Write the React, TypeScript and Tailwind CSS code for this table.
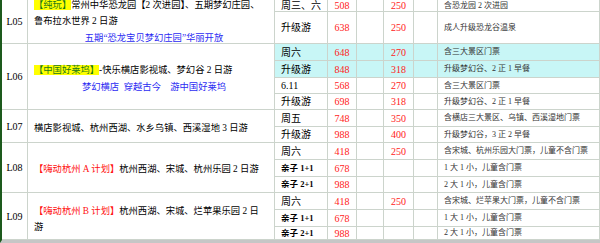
import type { ReactNode } from 'react';

type Row = {
  day: string;
  p1: string;
  p2: string;
  note: string;
  hl?: boolean;
  small?: boolean;
};

type Group = {
  code: string;
  start: number;
  span: string;
  pad: string;
  body: ReactNode;
};

const rows: Row[] = [
  { day: '周三、六', p1: '508', p2: '250', note: '含恐龙园 2 次进园' },
  { day: '升级游', p1: '638', p2: '250', note: '成人升级恐龙谷温泉' },
  { day: '周六', p1: '648', p2: '270', note: '含三大景区门票', hl: true },
  { day: '升级游', p1: '848', p2: '318', note: '升级梦幻谷、2 正 1 早餐', hl: true },
  { day: '6.11', p1: '568', p2: '270', note: '含三大景区门票' },
  { day: '升级游', p1: '698', p2: '318', note: '升级梦幻谷、2 正 1 早餐' },
  { day: '周五', p1: '748', p2: '350', note: '含横店三大景区、乌镇、西溪湿地门票' },
  { day: '升级游', p1: '988', p2: '400', note: '升级梦幻谷，3 正 2 早餐' },
  { day: '周六', p1: '418', p2: '250', note: '含宋城、杭州乐园大门票，儿童不含门票' },
  { day: '亲子 1+1', p1: '678', p2: '', note: '1 大 1 小，儿童含门票', small: true },
  { day: '亲子 2+1', p1: '988', p2: '', note: '2 大 1 小，儿童含门票', small: true },
  { day: '周六', p1: '418', p2: '250', note: '含宋城、烂苹果大门票，儿童不含门票' },
  { day: '亲子 1+1', p1: '678', p2: '', note: '1 大 1 小，儿童含门票', small: true },
  { day: '亲子 2+1', p1: '988', p2: '', note: '2 大 1 小，儿童含门票', small: true },
];

const Mark = ({ children }: { children: ReactNode }) => (
  <span className="bg-[#ffff00] text-[#1a7a1a]">{children}</span>
);

const Blue = ({ children }: { children: ReactNode }) => (
  <div className="text-center text-[#2c2cf2]">{children}</div>
);

const groups: Group[] = [
  {
    code: 'L05',
    start: 0,
    span: 'row-span-2',
    pad: 'pt-0',
    body: (
      <>
        <div>
          <Mark>【纯玩】</Mark>常州中华恐龙园【2 次进园】、五期梦幻庄园、
        </div>
        <div>鲁布拉水世界 2 日游</div>
        <Blue>五期“恐龙宝贝梦幻庄园”华丽开放</Blue>
      </>
    ),
  },
  {
    code: 'L06',
    start: 2,
    span: 'row-span-4',
    pad: 'pt-[4px]',
    body: (
      <>
        <div>
          <Mark>【中国好莱坞】</Mark>-快乐横店影视城、梦幻谷 2 日游
        </div>
        <Blue>梦幻横店&nbsp;&nbsp;穿越古今&nbsp;&nbsp;&nbsp;&nbsp;游中国好莱坞</Blue>
      </>
    ),
  },
  {
    code: 'L07',
    start: 6,
    span: 'row-span-2',
    pad: 'pt-[4px]',
    body: <div>横店影视城、杭州西湖、水乡乌镇、西溪湿地 3 日游</div>,
  },
  {
    code: 'L08',
    start: 8,
    span: 'row-span-3',
    pad: 'pt-[4px]',
    body: (
      <div>
        <span className="text-[#ff1010]">【嗨动杭州 A 计划】</span>杭州西湖、宋城、杭州乐园 2 日游
      </div>
    ),
  },
  {
    code: 'L09',
    start: 11,
    span: 'row-span-3',
    pad: 'pt-[6px]',
    body: (
      <>
        <div>
          <span className="text-[#ff1010]">【嗨动杭州 B 计划】</span>杭州西湖、宋城、烂苹果乐园 2 日
        </div>
        <div>游</div>
      </>
    ),
  },
];

const cell = 'border-r border-b border-[#ccd4cc]';

export default function App() {
  return (
    <div className="h-[243px] w-[600px] overflow-hidden bg-white">
      <div
        className="grid w-full grid-cols-[26px_247px_53px_29px_27px_30px_24px_1fr] grid-rows-[12px_32px_17px_17px_16px_16px_17px_16px_17px_17px_16px_17px_17px_13px] border-b-[3px] border-l-2 border-b-[#c6c6c6] border-l-[#1d5a1d] text-black"
        style={{ fontFamily: '"Liberation Serif", "Noto Sans CJK SC", serif' }}
      >
        {rows.map((r, i) => {
          const g = groups.find((x) => x.start === i);
          const fill = r.hl ? 'bg-[#c8f6f6]' : 'bg-white';
          return [
            g && (
              <div key={`c${i}`} className={`${cell} ${g.span} flex items-center justify-center text-[10px]`}>
                {g.code}
              </div>
            ),
            g && (
              <div
                key={`d${i}`}
                className={`${cell} ${g.span} ${g.pad} flex flex-col justify-center overflow-hidden whitespace-nowrap pl-[6px] text-[9.3px] leading-[16.5px]`}
              >
                {g.body}
              </div>
            ),
            <div
              key={`w${i}`}
              className={`${cell} ${fill} flex items-center whitespace-nowrap pl-[6px] ${
                r.small ? 'text-[8.5px] font-bold' : 'text-[10px]'
              }`}
            >
              {r.day}
            </div>,
            <div key={`p${i}`} className={`${cell} ${fill} flex items-center justify-center text-[10px] text-[#ff1a1a]`}>
              {r.p1}
            </div>,
            <div key={`b${i}`} className={`${cell} ${fill}`} />,
            <div key={`q${i}`} className={`${cell} ${fill} flex items-center justify-center text-[10px] text-[#ff1a1a]`}>
              {r.p2}
            </div>,
            <div key={`e${i}`} className={`${cell} ${fill}`} />,
            <div
              key={`n${i}`}
              className={`${cell} ${fill} flex items-center whitespace-nowrap pl-[6px] text-[8px] text-[#333333]`}
            >
              {r.note}
            </div>,
          ];
        })}
      </div>
    </div>
  );
}
